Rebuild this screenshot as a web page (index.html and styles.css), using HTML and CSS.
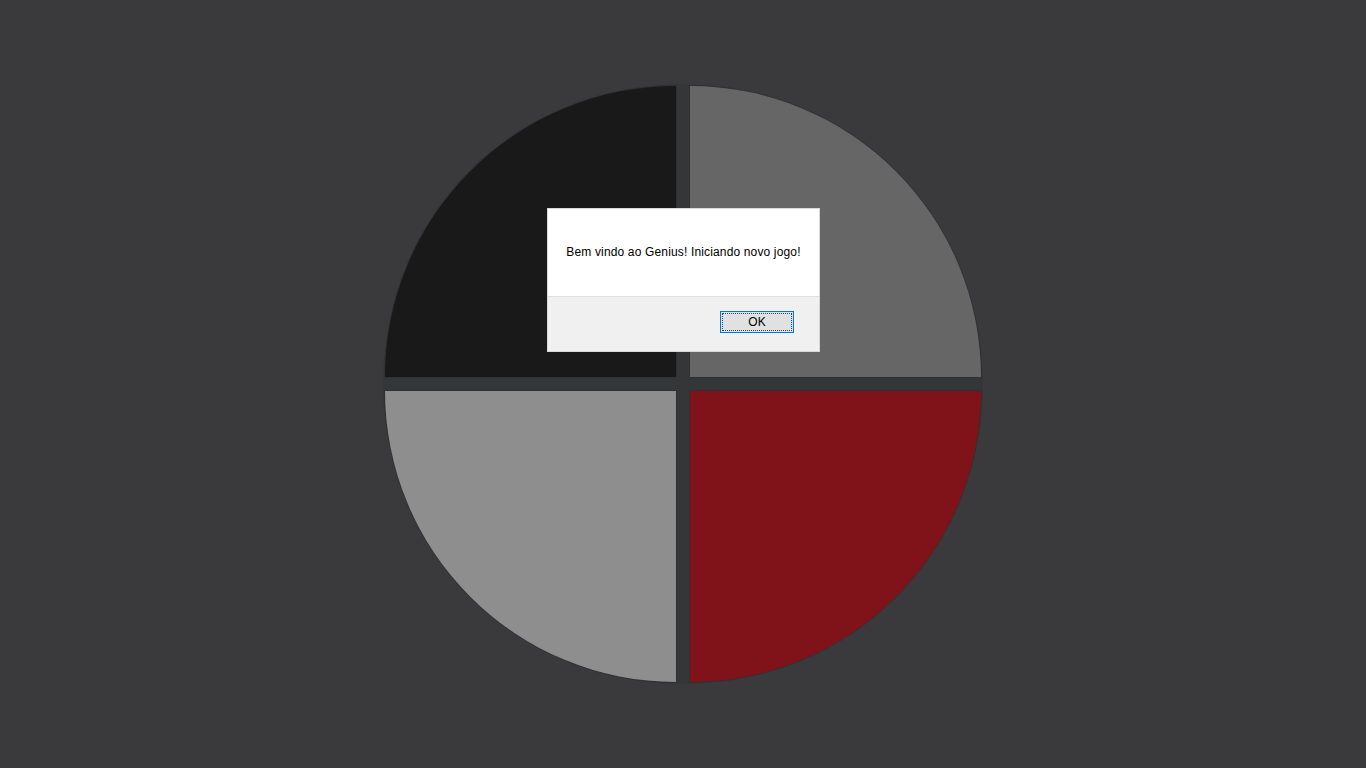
FILE: index.html
```html
<!DOCTYPE html>
<html lang="pt-BR">
<head>
<meta charset="utf-8">
<title>Genius</title>
<link rel="stylesheet" href="styles.css">
</head>
<body>
<main class="stage">
  <div class="genius">
    <div class="pad pad-tl"></div>
    <div class="pad pad-tr"></div>
    <div class="pad pad-bl"></div>
    <div class="pad pad-br"></div>
  </div>
  <div class="dialog" role="alertdialog">
    <div class="dialog-body">Bem vindo ao Genius! Iniciando novo jogo!</div>
    <div class="dialog-footer">
      <button class="dialog-btn"><span class="focus">OK</span></button>
    </div>
  </div>
</main>
</body>
</html>
```
FILE: styles.css
```css
* { box-sizing: border-box; }
html, body { margin: 0; padding: 0; }
body {
  background: #3a3a3c;
  width: 1366px;
  height: 768px;
  overflow: hidden;
  font-family: "Liberation Sans", Arial, sans-serif;
}
.stage {
  position: relative;
  width: 1366px;
  height: 768px;
  display: flex;
  align-items: center;
  justify-content: center;
}
.genius {
  width: 600px;
  height: 600px;
  border-radius: 50%;
  background: #353638;
  padding: 2px;
  display: grid;
  grid-template-columns: 291px 291px;
  grid-template-rows: 291px 291px;
  gap: 14px;
  justify-content: center;
  align-content: center;
}
.pad-tl { background: #191919; border-top-left-radius: 100%; }
.pad-tr { background: #666666; border-top-right-radius: 100%; }
.pad-bl { background: #8e8e8e; border-bottom-left-radius: 100%; }
.pad-br { background: #80131a; border-bottom-right-radius: 100%; }
.pad { box-shadow: 0 0 0 1px rgba(40, 40, 42, 0.35); }

.dialog {
  position: absolute;
  left: 547px;
  top: 208px;
  width: 273px;
  height: 144px;
  border: 1px solid #d8d8d8;
  background: #f0f0f0;
  display: flex;
  flex-direction: column;
}
.dialog-body {
  height: 88px;
  background: #ffffff;
  border-bottom: 1px solid #dfdfdf;
  display: flex;
  align-items: center;
  justify-content: center;
  font-size: 12px;
  letter-spacing: 0.15px;
  color: #000;
  padding-bottom: 1px;
  white-space: nowrap;
}
.dialog-footer {
  flex: 1;
  display: flex;
  justify-content: flex-end;
  align-items: flex-start;
  padding: 14px 25px 0 0;
}
.dialog-btn {
  width: 74px;
  height: 22px;
  border: 1px solid #0078d7;
  background: #e1e1e1;
  padding: 1px;
  margin: 0;
  font-family: "Liberation Sans", Arial, sans-serif;
  font-size: 12px;
  color: #000;
  display: flex;
}
.focus {
  flex: 1;
  border: 1px dotted #1a4a80;
  display: flex;
  align-items: center;
  justify-content: center;
  line-height: 1;
}
```
